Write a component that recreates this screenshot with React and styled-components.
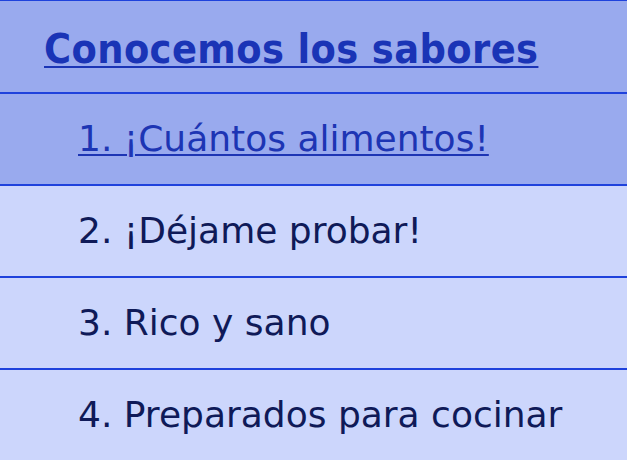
import React from "react";
import styled, { createGlobalStyle } from "styled-components";

const GlobalStyle = createGlobalStyle`
  html, body {
    margin: 0;
    padding: 0;
    background: #ccd6fc;
  }
`;

const Menu = styled.nav`
  width: 100%;
  border-top: 1px solid #1f42dc;
  box-sizing: border-box;
`;

const Title = styled.div`
  background: #99aaee;
  padding: 24px 0 19px 44px;
  border-bottom: 2px solid #1f42dc;
  a {
    font-family: "DejaVu Sans Condensed", "DejaVu Sans", sans-serif;
    font-stretch: condensed;
    font-weight: 700;
    font-size: 41px;
    line-height: 48px;
    letter-spacing: 0.4px;
    color: #1a34b6;
    text-decoration: underline;
    text-decoration-thickness: 2px;
    text-underline-offset: 3px;
  }
`;

const List = styled.ol`
  list-style: none;
  margin: 0;
  padding: 0;
`;

const Item = styled.li`
  background: ${props => (props.active ? "#99aaee" : "#ccd6fc")};
  padding: 24px 0 24px 78px;
  font-family: "DejaVu Sans", Verdana, sans-serif;
  font-size: 36px;
  line-height: 42px;
  color: #0f1a58;
  border-bottom: 2px solid #1f42dc;
  &:last-child {
    border-bottom: none;
  }
  a {
    color: #1d35b4;
    text-decoration: underline;
    text-decoration-thickness: 2px;
    text-underline-offset: 3px;
  }
`;

const chapters = [
  "¡Cuántos alimentos!",
  "¡Déjame probar!",
  "Rico y sano",
  "Preparados para cocinar",
];

export default function App() {
  return (
    <>
      <GlobalStyle />
      <Menu>
        <Title>
          <a href="#sabores">Conocemos los sabores</a>
        </Title>
        <List>
          {chapters.map((name, i) => (
            <Item key={name} active={i === 0}>
              {i === 0 ? (
                <a href="#cap1">{`${i + 1}. ${name}`}</a>
              ) : (
                `${i + 1}. ${name}`
              )}
            </Item>
          ))}
        </List>
      </Menu>
    </>
  );
}
